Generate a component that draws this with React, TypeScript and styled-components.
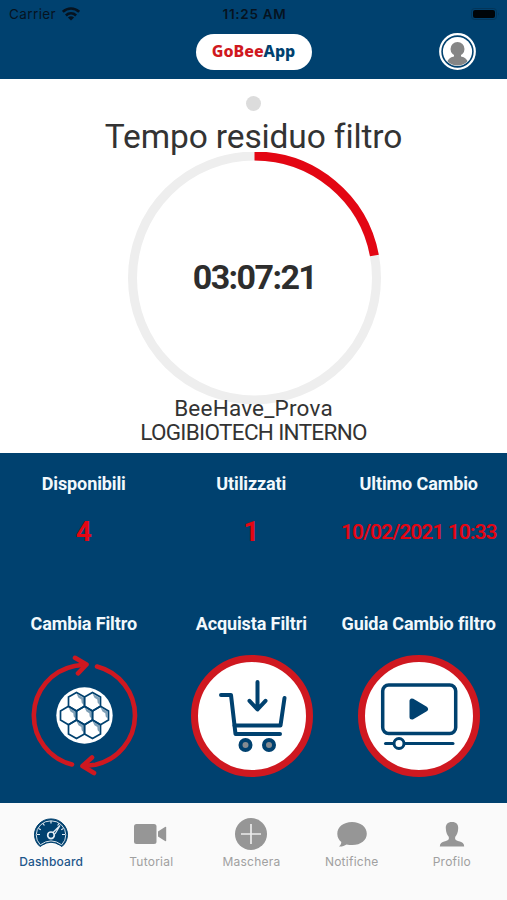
import React from 'react';
import styled, { createGlobalStyle } from 'styled-components';

const NAVY = '#00416f';
const RED = '#e30613';
const RING = '#cf1820';
const GREY = '#969696';

const Global = createGlobalStyle`
  * { box-sizing: border-box; }
  body { margin: 0; background: #fff; }
  svg { display: block; flex: none; }
`;

const Screen = styled.div`
  width: 507px;
  height: 900px;
  display: flex;
  flex-direction: column;
  overflow: hidden;
  background: #fff;
  font-family: Roboto, 'Open Sans', sans-serif;
`;

const Header = styled.header`
  height: 79px;
  flex: none;
  background: ${NAVY};
`;

const StatusBar = styled.div`
  height: 28px;
  padding: 0 7px 0 9px;
  display: grid;
  grid-template-columns: 1fr auto 1fr;
  align-items: center;
  color: #06131f;
  font-family: Inter, sans-serif;
  font-size: 13.5px;
`;

const Carrier = styled.div`
  display: flex;
  align-items: center;
  gap: 6px;
  letter-spacing: 0.4px;
`;

const Clock = styled.div`
  font-weight: 600;
  letter-spacing: 0.72px;
`;

const Battery = styled.div`
  display: flex;
  justify-content: flex-end;
`;

const NavBar = styled.div`
  height: 47px;
  padding: 0 31px 0 0;
  display: grid;
  grid-template-columns: 196px 116px 1fr;
  align-items: center;
`;

const Logo = styled.div`
  grid-column: 2;
  height: 36px;
  border-radius: 18px;
  background: #fff;
  color: ${NAVY};
  font-family: 'Noto Sans', sans-serif;
  font-weight: 800;
  font-size: 16px;
  line-height: 34px;
  letter-spacing: 0;
  text-align: center;
  padding-right: 1px;

  span { color: ${RING}; }
`;

const Avatar = styled.div`
  display: flex;
  justify-content: flex-end;
`;

const Timer = styled.main`
  height: 374px;
  flex: none;
  padding-top: 17px;
  display: flex;
  flex-direction: column;
  align-items: center;
  color: #333;
`;

const PageDot = styled.div`
  width: 15px;
  height: 15px;
  flex: none;
  border-radius: 50%;
  background: #dcdcdc;
`;

const Title = styled.h1`
  height: 41px;
  margin: 0;
  font-weight: 400;
  font-size: 33.5px;
  line-height: 52px;
  letter-spacing: -0.12px;
  white-space: nowrap;
`;

const Dial = styled.div`
  width: 254px;
  height: 244px;
  flex: none;
  display: grid;
  justify-items: center;

  > * { grid-area: 1 / 1; }
`;

const Countdown = styled.div`
  margin-top: 105px;
  padding-left: 2px;
  font-weight: 700;
  font-size: 34px;
  line-height: 40px;
  letter-spacing: -1.6px;
  color: #2d2d2d;
`;

const Owner = styled.div<{ $spacing: number }>`
  height: 24px;
  font-size: 22.5px;
  line-height: 24px;
  letter-spacing: ${(p) => p.$spacing}px;
  white-space: nowrap;
`;

const Panel = styled.section`
  height: 350px;
  flex: none;
  padding: 19px 4.5px 0 0;
  background: ${NAVY};
  display: grid;
  grid-template-columns: repeat(3, minmax(0, 1fr));
  grid-template-rows: 140px 1fr;
`;

const Cell = styled.div`
  display: flex;
  flex-direction: column;
  align-items: center;
`;

const Label = styled.div`
  height: 24px;
  color: #f2f8fc;
  font-weight: 700;
  font-size: 18px;
  line-height: 24px;
  letter-spacing: -0.11px;
  white-space: nowrap;
`;

const Value = styled.div<{ $small?: boolean }>`
  margin-top: 19px;
  color: ${RED};
  font-weight: ${(p) => (p.$small ? 600 : 700)};
  font-size: ${(p) => (p.$small ? 21 : 28)}px;
  line-height: 34px;
  letter-spacing: ${(p) => (p.$small ? '-0.95px' : '0')};
  white-space: nowrap;
`;

const Action = styled.div`
  margin-top: 18.5px;
  padding-left: 1px;
`;

const TabBar = styled.nav`
  flex: 1;
  padding: 0 5px 0 1px;
  background: #fafafa;
  display: grid;
  grid-template-columns: repeat(5, 1fr);
`;

const Tab = styled.div<{ $active?: boolean }>`
  padding-top: 13px;
  display: flex;
  flex-direction: column;
  align-items: center;
  color: ${(p) => (p.$active ? '#1d568a' : '#a0a0a0')};
  font-family: Inter, sans-serif;
  font-weight: ${(p) => (p.$active ? 500 : 400)};
  font-size: 12px;
  line-height: 17px;
  letter-spacing: ${(p) => (p.$active ? 0.15 : 0.25)}px;
`;

const TabIcon = styled.div`
  height: 37px;
`;

const Wifi = () => (
  <svg width="18" height="14" viewBox="0 0 18 14" fill="none" stroke="#06131f" strokeWidth="2.7">
    <path d="M.8 4.800C5.500.4 12.500.4 17.200 4.800" />
    <path d="M3.900 8.400c3-2.700 7.200-2.700 10.200 0" />
    <path d="M9 13.500 5.900 10.500q3.100-2.400 6.200 0z" fill="#06131f" stroke="none" />
  </svg>
);

const BatteryIcon = () => (
  <svg width="30" height="14" viewBox="0 0 30 14">
    <rect x="1.500" y="1.500" width="25" height="11" rx="3" fill="none" stroke="#033559" />
    <rect x="3" y="3" width="22" height="8" rx="2" fill="#000509" />
    <path d="M28 5.400q1.600 1.600 0 3.200z" fill="#033559" />
  </svg>
);

const AvatarIcon = () => (
  <svg width="37" height="37" viewBox="0 0 37 37">
    <defs>
      <clipPath id="face"><circle cx="18.500" cy="18.500" r="14" /></clipPath>
    </defs>
    <circle cx="18.500" cy="18.500" r="17.300" fill={NAVY} stroke="#fff" strokeWidth="2.200" />
    <circle cx="18.500" cy="18.500" r="14.600" fill="#fff" />
    <g clipPath="url(#face)" fill="#858585">
      <circle cx="18.500" cy="16" r="7" />
      <path d="M15 20h7v3.500c4 .8 6.500 3 7 6V34H8v-4.500c.5-3 3-5.200 7-6z" />
    </g>
  </svg>
);

const HEX = 'M0-9.200 8-4.600V4.600L0 9.200-8 4.600V-4.600z';
const HEXES = [[-8, -13.8], [8, -13.8], [-16, 0], [0, 0], [16, 0], [-8, 13.8], [8, 13.8]];

const SwapIcon = () => (
  <svg width="122" height="122" viewBox="0 0 122 122">
    <circle cx="61.500" cy="60.500" r="28.200" fill="#fff" />
    {HEXES.map(([x, y]) => (
      <g key={`${x},${y}`} transform={`translate(${x + 61.5} ${y + 60.5})`}>
        <path d={HEX} fill="none" stroke={NAVY} strokeWidth="1.700" />
        <path d="M0-8 7-4V3L5.200 1 4.800-2.200 2-4z" fill={NAVY} opacity=".5" />
      </g>
    ))}
    <g fill="none" stroke={RING} strokeWidth="4.600" strokeLinecap="round" strokeLinejoin="round">
      <path d="M49 109.500A50.500 50.500 0 0 1 51.500 11L62.500 9.500" />
      <path d="M52 2.800 63.500 9.500 55 18.300" />
      <path d="M74 11.500A50.500 50.500 0 0 1 72.500 109.700L60.500 111" />
      <path d="M71 118 59.500 111 69 102.500" />
    </g>
  </svg>
);

const CartIcon = () => (
  <svg width="122" height="122" viewBox="0 0 122 122">
    <circle cx="61" cy="61" r="57.500" fill="#fff" stroke={RING} strokeWidth="7" />
    <g fill="none" stroke={NAVY} strokeWidth="4" strokeLinecap="round" strokeLinejoin="round">
      <path d="M30 40H40L44.500 79H89" />
      <path d="M43.500 70.500H89.500L93.500 43" />
      <path d="M66.500 27V54M58.500 45.800 66.500 54.500 74.500 45.800" />
    </g>
    <g fill="#858b91" stroke={NAVY} strokeWidth="4">
      <circle cx="54.500" cy="90" r="5" />
      <circle cx="78" cy="90" r="5" />
    </g>
  </svg>
);

const VideoIcon = () => (
  <svg width="122" height="122" viewBox="0 0 122 122">
    <circle cx="61" cy="61" r="57.500" fill="#fff" stroke={RING} strokeWidth="7" />
    <g fill="none" stroke={NAVY} strokeWidth="3.500" strokeLinecap="round" strokeLinejoin="round">
      <rect x="24.700" y="30" width="73" height="48.500" rx="6" />
      <path d="M27.500 88.500H95" strokeWidth="3" />
      <path d="M54 46V62L67.500 54z" fill={NAVY} strokeWidth="5" />
      <circle cx="41" cy="88.500" r="5" fill="#fff" strokeWidth="3" />
    </g>
  </svg>
);

const GaugeIcon = () => (
  <svg width="36" height="34" viewBox="0 0 36 34">
    <path d="M7 30.500A16.500 15.800 0 1 1 29 30.500L26.500 29Q18 23.500 9.500 29z" fill={NAVY} stroke={NAVY} strokeWidth="1" strokeLinejoin="round" />
    <path d="M7.300 28.800A14.800 14.200 0 1 1 28.700 28.800Q18 21 7.300 28.800z" fill="none" stroke="#d6e2eb" strokeWidth="1" />
    <g fill="none" stroke="#e3edf4" strokeWidth="1.200">
      <path d="M18 5V7.500M10 7.500 11.400 9.500M5.500 12.500 7.800 13.800M4 18.500H7M26 7.500 24.600 9.500M30.500 12.500 28.200 13.800M32 18.500H29" />
      <path d="M20 16.500 27 9.500 22 18" />
      <circle cx="18" cy="19.300" r="3.300" strokeWidth="1.700" />
    </g>
  </svg>
);

const CameraIcon = () => (
  <svg width="34" height="34" viewBox="0 0 34 34" fill={GREY}>
    <rect x="0" y="8" width="22.500" height="20" rx="2.500" />
    <path d="M24 15.500 31 11Q32.200 10.500 32.200 11.500V24.500Q32.200 25.500 31 25L24 20.500z" />
  </svg>
);

const PlusIcon = () => (
  <svg width="34" height="34" viewBox="0 0 34 34">
    <circle cx="17" cy="18" r="16" fill={GREY} />
    <path d="M17 8V28M7 18H27" stroke="#ececec" strokeWidth="1.700" />
  </svg>
);

const ChatIcon = () => (
  <svg width="32" height="34" viewBox="0 0 32 34" fill={GREY}>
    <path d="M16 6C7.500 6 1.300 11 1.300 17.800c0 4 1.700 6.200 4 8.200C5.300 28 4.500 29.200 3 30.500c3 .2 5.500-.8 7.500-2.100 12 2.600 20.300-3 20.300-10.600C30.800 11 24.500 6 16 6z" />
  </svg>
);

const PersonIcon = () => (
  <svg width="28" height="34" viewBox="0 0 28 34" fill={GREY}>
    <path d="M14 6c-4.500 0-6.400 2.700-6.200 6.300.2 4.500 1.400 6.500 2.900 8.400.8 2.800-.7 3.500-3.700 4.600-3.300 1.100-5.200 2.100-5.200 5.200h24.400c0-3.100-1.900-4.100-5.200-5.200-3-1.100-4.500-1.800-3.700-4.600 1.500-1.900 2.700-3.900 2.900-8.400.2-3.600-1.700-6.300-6.200-6.300z" />
  </svg>
);

const RADIUS = 122;
const ELAPSED = 0.2204;
const LENGTH = 2 * Math.PI * RADIUS;

const TABS = [
  { name: 'Dashboard', Icon: GaugeIcon, active: true },
  { name: 'Tutorial', Icon: CameraIcon },
  { name: 'Maschera', Icon: PlusIcon },
  { name: 'Notifiche', Icon: ChatIcon },
  { name: 'Profilo', Icon: PersonIcon },
];

export default function App() {
  return (
    <Screen>
      <Global />
      <Header>
        <StatusBar>
          <Carrier>Carrier <Wifi /></Carrier>
          <Clock>11:25 AM</Clock>
          <Battery><BatteryIcon /></Battery>
        </StatusBar>
        <NavBar>
          <Logo><span>GoBee</span>App</Logo>
          <Avatar><AvatarIcon /></Avatar>
        </NavBar>
      </Header>

      <Timer>
        <PageDot />
        <Title>Tempo residuo filtro</Title>
        <Dial>
          <svg width="254" height="254" viewBox="0 0 254 254" fill="none" strokeWidth="9">
            <circle cx="127.500" cy="126" r={RADIUS} stroke="#eee" />
            <circle
              cx="127.500"
              cy="126"
              r={RADIUS}
              stroke={RED}
              strokeDasharray={`${LENGTH * ELAPSED} ${LENGTH}`}
              transform="rotate(-90 127.500 126)"
            />
          </svg>
          <Countdown>03:07:21</Countdown>
        </Dial>
        <Owner $spacing={0.2}>BeeHave_Prova</Owner>
        <Owner $spacing={-0.68}>LOGIBIOTECH INTERNO</Owner>
      </Timer>

      <Panel>
        <Cell><Label>Disponibili</Label><Value>4</Value></Cell>
        <Cell><Label>Utilizzati</Label><Value>1</Value></Cell>
        <Cell><Label>Ultimo Cambio</Label><Value $small>10/02/2021 10:33</Value></Cell>
        <Cell><Label>Cambia Filtro</Label><Action><SwapIcon /></Action></Cell>
        <Cell><Label>Acquista Filtri</Label><Action><CartIcon /></Action></Cell>
        <Cell><Label>Guida Cambio filtro</Label><Action><VideoIcon /></Action></Cell>
      </Panel>

      <TabBar>
        {TABS.map(({ name, Icon, active }) => (
          <Tab key={name} $active={active}>
            <TabIcon><Icon /></TabIcon>
            {name}
          </Tab>
        ))}
      </TabBar>
    </Screen>
  );
}
